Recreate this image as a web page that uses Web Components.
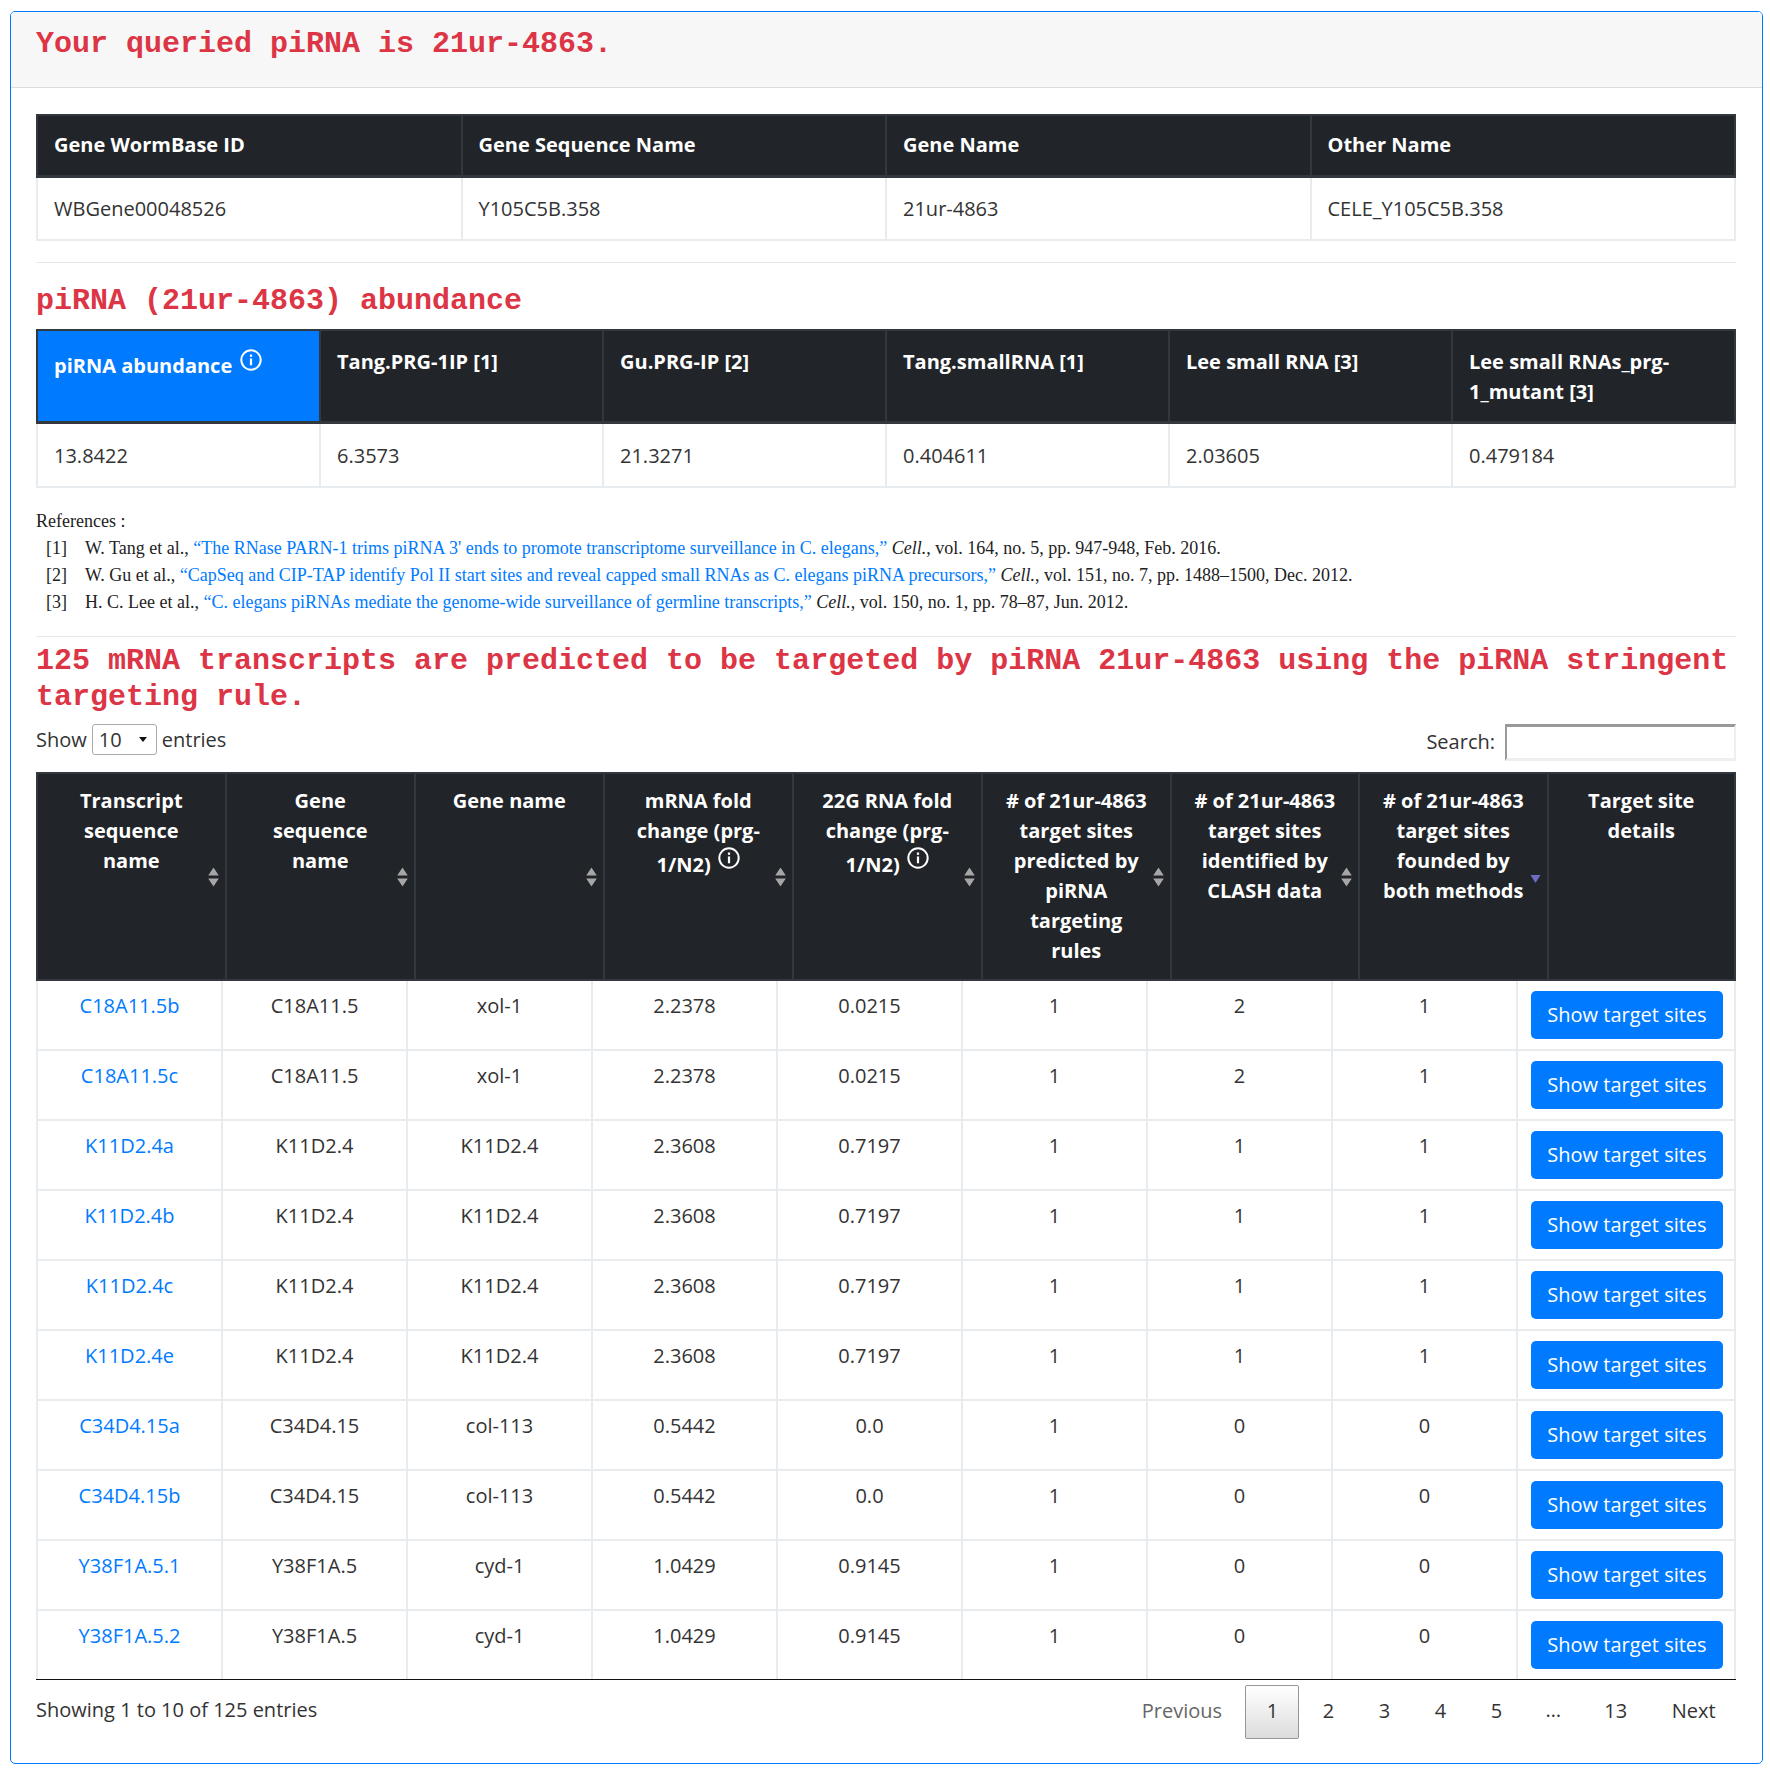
<!DOCTYPE html>
<html lang="en"><head><meta charset="utf-8"><title>piRNA 21ur-4863</title>
<style>
html,body{margin:0;padding:0;background:#fff}
body{font:20px/30px "Open Sans",sans-serif;color:#333;padding:11px 7px 0 10px}
</style></head><body>
<x-card>
  <x-heading slot="header">Your queried piRNA is 21ur-4863.</x-heading>
  <x-simple-table columns="Gene WormBase ID|Gene Sequence Name|Gene Name|Other Name" values="WBGene00048526|Y105C5B.358|21ur-4863|CELE_Y105C5B.358"></x-simple-table>
  <x-rule gap="21 20"></x-rule>
  <x-heading>piRNA (21ur-4863) abundance</x-heading>
  <x-simple-table style="margin-top:10px" highlight columns="piRNA abundance|Tang.PRG-1IP [1]|Gu.PRG-IP [2]|Tang.smallRNA [1]|Lee small RNA [3]|Lee small RNAs_prg-1_mutant [3]" values="13.8422|6.3573|21.3271|0.404611|2.03605|0.479184"></x-simple-table>
  <x-refs></x-refs>
  <x-rule gap="20 6"></x-rule>
  <x-heading>125 mRNA transcripts are predicted to be targeted by piRNA 21ur-4863 using the piRNA stringent targeting rule.</x-heading>
  <x-transcripts></x-transcripts>
</x-card>
<script>
const INFO=`<svg class="info" width="22" height="22" viewBox="0 0 20 20" fill="none" aria-hidden="true"><circle cx="10" cy="10" r="8.8" stroke="#fff" stroke-width="1.8"/><rect x="9" y="8.6" width="2" height="6.2" fill="#fff"/><rect x="9" y="5" width="2" height="2.1" fill="#fff"/></svg>`;
const define=(n,c)=>customElements.define(n,c);
class Base extends HTMLElement{
  render(html){ (this.shadowRoot||this.attachShadow({mode:'open'})).innerHTML=html; }
}
define('x-card',class extends Base{connectedCallback(){this.render(`<style>
:host{display:block;width:1753px;height:1753px;box-sizing:border-box;border:1px solid #007bff;border-radius:5px;overflow:hidden;background:#fff}
header{background:#f7f7f7;border-bottom:1px solid #dcdcdc;padding:14px 25px 25px;height:76px;box-sizing:border-box}
main{padding:26px 26px 0 25px}
</style><header><slot name="header"></slot></header><main><slot></slot></main>`)}});
define('x-heading',class extends Base{connectedCallback(){this.render(`<style>
:host{display:block;font:700 30px/36px "Liberation Mono",monospace;color:#dc3545}
</style><slot></slot>`)}});
define('x-rule',class extends Base{connectedCallback(){const[a,b]=(this.getAttribute('gap')||'20 20').split(' ');this.render(`<style>
:host{display:block;height:1px;background:#e8e8e8;margin:${a}px 0 ${b}px}
</style>`)}});
define('x-simple-table',class extends Base{connectedCallback(){
 const c=this.getAttribute('columns').split('|'),v=this.getAttribute('values').split('|'),h=this.hasAttribute('highlight');
 this.render(`<style>
:host{display:block}
table{width:1700px;table-layout:fixed;border-collapse:collapse;font:20px/30px "Open Sans",sans-serif}
th,td{padding:15px 15px 15px 16px;text-align:left;vertical-align:top}
th{background:#212529;color:#fff;font-weight:700;border:2px solid #32383e;border-bottom-width:3px;padding-top:${h?16:14}px;padding-bottom:${h?14:15}px}
th.hl{background:#007bff;padding-top:18px;padding-bottom:12px}
td{border:2px solid #e9ecef;color:#333;padding-top:${h?17:16}px}
.info{vertical-align:2px;margin-left:3px}
</style><table><thead><tr>${c.map((t,i)=>`<th class="${h&&i==0?'hl':''}">${t}${h&&i==0?' '+INFO:''}</th>`).join('')}</tr></thead>
<tbody><tr>${v.map(t=>`<td>${t}</td>`).join('')}</tr></tbody></table>`)}});
define('x-refs',class extends Base{connectedCallback(){
 const R=[['[1]','W. Tang et al., ','“The RNase PARN-1 trims piRNA 3\' ends to promote transcriptome surveillance in C. elegans,”','Cell.',', vol. 164, no. 5, pp. 947-948, Feb. 2016.'],
 ['[2]','W. Gu et al., ','“CapSeq and CIP-TAP identify Pol II start sites and reveal capped small RNAs as C. elegans piRNA precursors,”','Cell.',', vol. 151, no. 7, pp. 1488–1500, Dec. 2012.'],
 ['[3]','H. C. Lee et al., ','“C. elegans piRNAs mediate the genome-wide surveillance of germline transcripts,”','Cell.',', vol. 150, no. 1, pp. 78–87, Jun. 2012.']];
 this.render(`<style>
:host{display:block;margin-top:20px;font:18px/27px "Liberation Serif",serif;color:#222}
.r{display:grid;grid-template-columns:39px 1fr;padding-left:10px}
a{color:#007bff;text-decoration:none}
</style><div>References :</div>${R.map(r=>`<div class="r"><span>${r[0]}</span><span>${r[1]}<a href="#">${r[2]}</a> <i>${r[3]}</i>${r[4]}</span></div>`).join('')}`)}});
define('x-length-bar',class extends Base{connectedCallback(){this.render(`<style>
:host{display:flex;justify-content:space-between;align-items:flex-start;height:48px;margin-top:9px;font:20px/30px "Open Sans",sans-serif;color:#333}
.l{display:flex;align-items:center;gap:5px;height:31px}
.s{display:flex;align-items:center;gap:10px;height:37px}
label{margin-top:-2px}
.w{position:relative;display:block;height:31px}
.w::after{content:"";position:absolute;right:10px;top:13px;border:4px solid transparent;border-top:5px solid #111;border-bottom:0}
select{display:block;appearance:none;width:65px;height:31px;box-sizing:border-box;font:20px "Open Sans",sans-serif;color:#333;background:#fff;border:1px solid #aaa;border-radius:3px;padding:0 0 0 6px;margin:0}
input{display:block;width:231px;height:37px;box-sizing:border-box;font:20px "Open Sans",sans-serif;background:#fff;border:3px solid;border-color:#999 #eee #eee #999;border-width:3px 2px 3px 2px;padding:1px 2px;margin:0;outline:0}
</style><div class="l">Show <span class="w"><select aria-label="entries"><option>10</option><option>25</option><option>50</option><option>100</option></select></span> entries</div>
<div class="s"><label for="q">Search:</label><input id="q" type="text"></div>`)}});
define('x-pager',class extends Base{connectedCallback(){
 const P=['Previous','1','2','3','4','5','…','13','Next'];
 this.render(`<style>
:host{display:flex;justify-content:space-between;align-items:flex-start;border-top:1px solid #111;padding-top:5px;font:20px/30px "Open Sans",sans-serif;color:#333}
.i{padding-top:10px}
nav{display:flex;margin-right:-1px}
a{display:block;box-sizing:border-box;height:54px;padding:10px 20.3px;margin-left:2px;border:1px solid transparent;border-radius:2px;color:#333;text-decoration:none}
a.p{color:#666}
a.c{background:linear-gradient(#fff,#dcdcdc);border-color:#979797}
span.e{padding:10px 20px 0;margin-left:2px}
</style><div class="i">Showing 1 to 10 of 125 entries</div><nav>${P.map(t=>t=='…'?`<span class="e">…</span>`:`<a href="#" class="${t=='Previous'?'p':t=='1'?'c':''}">${t}</a>`).join('')}</nav>`)}});
define('x-transcripts',class extends Base{connectedCallback(){
 const H=['Transcript<br>sequence<br>name','Gene<br>sequence<br>name','Gene name',`mRNA fold<br>change (prg-<br>1/N2) ${INFO}`,`22G RNA fold<br>change (prg-<br>1/N2) ${INFO}`,'# of 21ur-4863<br>target sites<br>predicted by<br>piRNA<br>targeting<br>rules','# of 21ur-4863<br>target sites<br>identified by<br>CLASH data','# of 21ur-4863<br>target sites<br>founded by<br>both methods','Target site<br>details'];
 const D=[['C18A11.5b','C18A11.5','xol-1','2.2378','0.0215',1,2,1],['C18A11.5c','C18A11.5','xol-1','2.2378','0.0215',1,2,1],['K11D2.4a','K11D2.4','K11D2.4','2.3608','0.7197',1,1,1],['K11D2.4b','K11D2.4','K11D2.4','2.3608','0.7197',1,1,1],['K11D2.4c','K11D2.4','K11D2.4','2.3608','0.7197',1,1,1],['K11D2.4e','K11D2.4','K11D2.4','2.3608','0.7197',1,1,1],['C34D4.15a','C34D4.15','col-113','0.5442','0.0',1,0,0],['C34D4.15b','C34D4.15','col-113','0.5442','0.0',1,0,0],['Y38F1A.5.1','Y38F1A.5','cyd-1','1.0429','0.9145',1,0,0],['Y38F1A.5.2','Y38F1A.5','cyd-1','1.0429','0.9145',1,0,0]];
 const W=[189,189,189,189,189,189,188,189];
 const sort=i=>i==8?'':i==7?`<svg class="sort" style="margin-top:2px" width="11" height="18" viewBox="0 0 10 18"><path d="M0 5h10L5 13z" fill="#6c6cc4"/></svg>`:`<svg class="sort" width="11" height="19" viewBox="0 0 10 18"><path d="M5 0l5 7.500H0zM0 10.500h10L5 18z" fill="#a6a6a6"/></svg>`;
 this.render(`<style>
:host{display:block;font:20px/30px "Open Sans",sans-serif}
table{width:1700px;table-layout:fixed;border-collapse:collapse;text-align:center}
th{position:relative;background:#212529;color:#fff;font-weight:700;border:2px solid #32383e;padding:12px .5px 13px 0;vertical-align:top;height:180px}
td{border:2px solid #e9ecef;padding:10px 0;vertical-align:top;color:#333}
tbody tr:first-child td{border-top:0}
tbody tr:last-child td{border-bottom:0}
.sort{position:absolute;right:6px;top:50%;transform:translateY(-50%)}
.info{vertical-align:3px;margin-top:1px;margin-left:2px}
a{color:#007bff;text-decoration:none}
button{display:block;margin:0 0 0 13px;width:192px;height:48px;padding:0;border:0;border-radius:5px;background:#007bff;color:#fff;font:20px/30px "Open Sans",sans-serif}
col.b{width:185px}
</style>
<x-length-bar></x-length-bar>
<table><colgroup>${W.map(w=>`<col style="width:${w}px">`).join('')}<col></colgroup><thead><tr>${H.map((t,i)=>`<th>${t}${sort(i)}</th>`).join('')}</tr></thead></table>
<table><colgroup>${'<col class="b">'.repeat(8)}<col></colgroup><tbody>${D.map(r=>`<tr><td><a href="#">${r[0]}</a></td>${r.slice(1).map(x=>`<td>${x}</td>`).join('')}<td><button>Show target sites</button></td></tr>`).join('')}</tbody></table>
<x-pager></x-pager>`)}});
</script>
</body></html>
